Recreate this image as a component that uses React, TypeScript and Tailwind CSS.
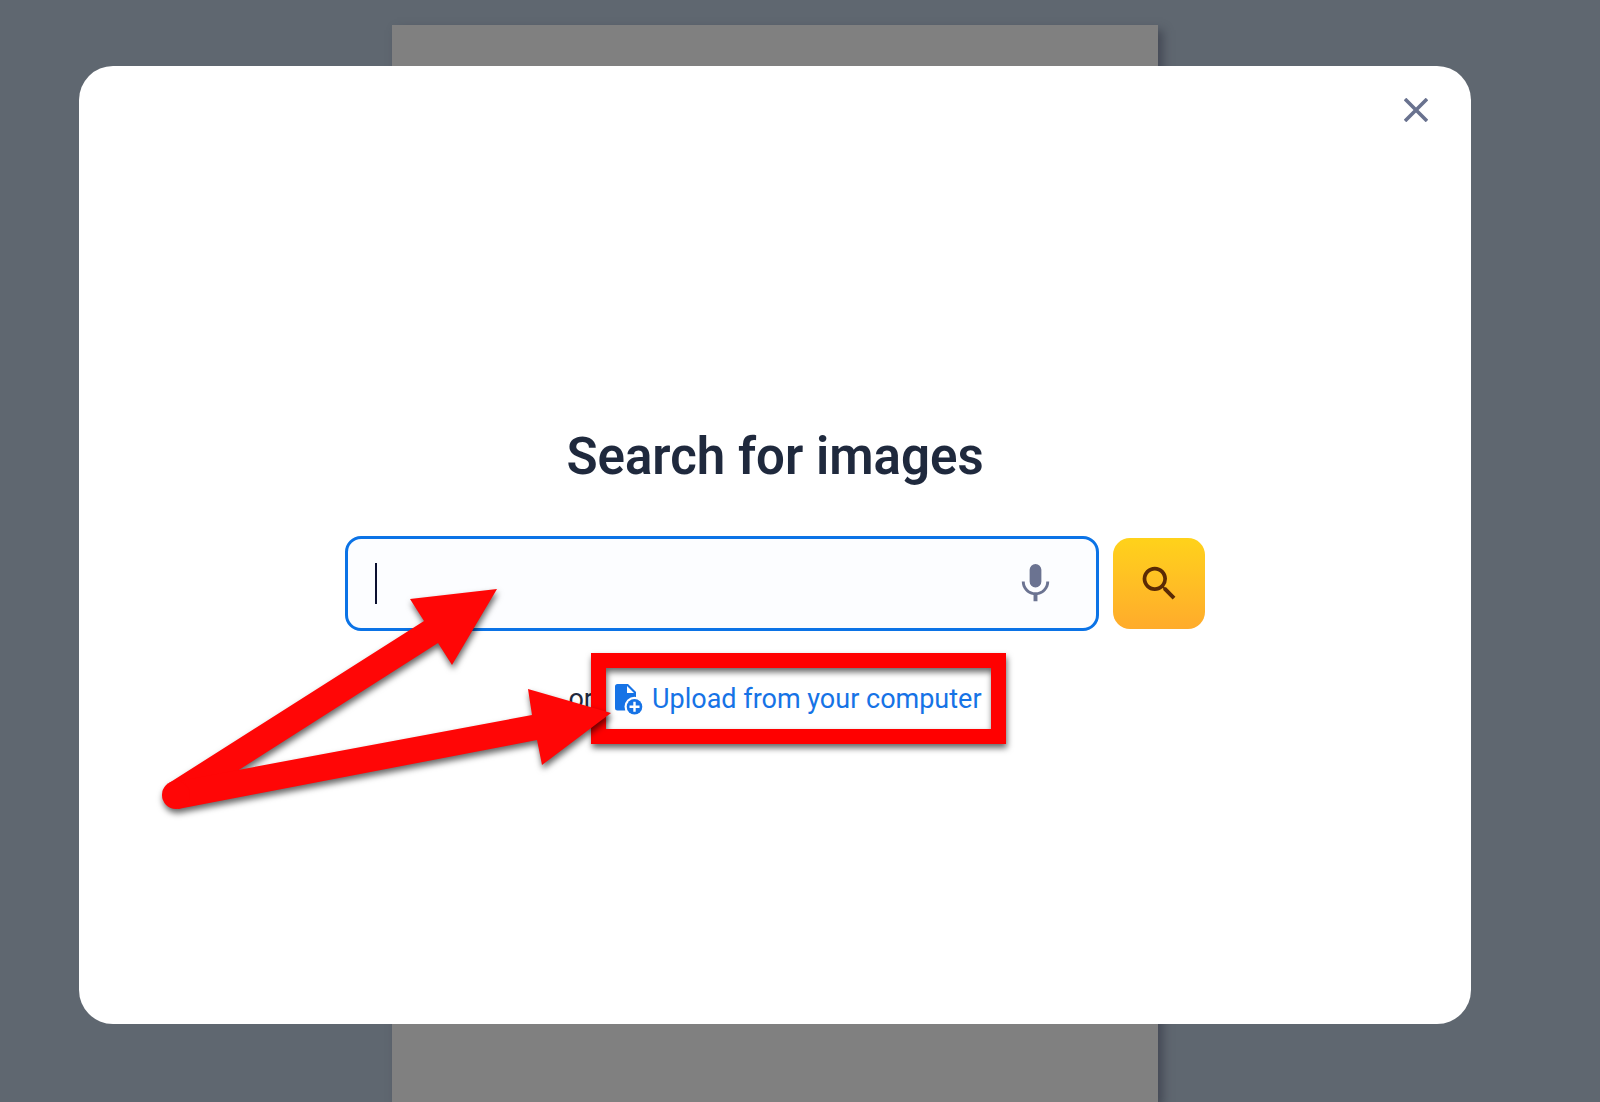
import React from "react";

function ArrowOverlay() {
  return (
    <svg
      aria-hidden="true"
      viewBox="0 0 480 260"
      className="pointer-events-none absolute -left-[194px] top-[39px] z-10 h-[260px] w-[480px] overflow-visible drop-shadow-[1px_4px_3px_rgba(0,0,0,0.6)]"
      fill="#ff0606"
    >
      <path d="M18 208 L273 46 L259 24 L346 14 L301 90 L287 68 L33 230Z" />
      <path d="M23 207 L381 140 L377 114 L460 138 L391 190 L386 165 L27 234Z" />
      <circle cx="25" cy="220" r="14" />
    </svg>
  );
}

function MicIcon() {
  return (
    <svg viewBox="0 0 24 24" className="size-[47px]" fill="currentColor" aria-hidden="true">
      <path d="M12,2A3,3 0 0,1 15,5V11A3,3 0 0,1 12,14A3,3 0 0,1 9,11V5A3,3 0 0,1 12,2M19,11C19,14.53 16.39,17.44 13,17.93V21H11V17.93C7.61,17.44 5,14.53 5,11H6.500A5.500,5.500 0 0,0 12,16.500A5.500,5.500 0 0,0 17.500,11H19Z" />
    </svg>
  );
}

function SearchIcon() {
  return (
    <svg viewBox="0 0 24 24" className="size-[45px]" fill="currentColor" aria-hidden="true">
      <path d="M15.5 14h-.79l-.28-.27A6.471 6.471 0 0 0 16 9.5 6.5 6.5 0 1 0 9.5 16c1.61 0 3.09-.59 4.23-1.57l.27.28v.79l5 4.99L20.49 19l-4.99-5zm-6 0C7.01 14 5 11.99 5 9.5S7.01 5 9.5 5 14 7.01 14 9.5 11.99 14 9.5 14z" />
    </svg>
  );
}

function FileAddIcon() {
  return (
    <svg viewBox="0 0 28 31" className="h-[31px] w-7" aria-hidden="true">
      <path d="M2.5 0H13L21 8V26.5H2.5A2.5 2.5 0 0 1 0 24V2.5A2.5 2.5 0 0 1 2.5 0Z" fill="currentColor" />
      <path d="M12 2V9H19Z" fill="#fff" />
      <circle cx="19.5" cy="22.7" r="10" fill="#fff" />
      <circle cx="19.5" cy="22.7" r="7.8" fill="currentColor" />
      <path d="M19.5 17.7V27.7M14.5 22.7H24.5" stroke="#fff" strokeWidth="2.4" />
    </svg>
  );
}

export default function App() {
  return (
    <div className="relative flex min-h-screen flex-col bg-[#5f6770] font-[Roboto,sans-serif]">
      <div className="absolute inset-x-0 bottom-0 top-[25px] flex justify-center">
        <div className="mr-[50px] w-[766px] bg-[#808080] shadow-[5px_5px_9px_rgba(50,54,66,0.6)]" />
      </div>
      <main
        role="dialog"
        aria-labelledby="title"
        className="relative mb-[78px] ml-[79px] mr-[129px] mt-[66px] flex flex-1 flex-col items-center justify-center rounded-[34px] bg-white pt-[54px]"
      >
        <button type="button" aria-label="Close" className="absolute right-[35px] top-6 flex size-10 items-center justify-center text-[#69728f]">
          <svg viewBox="0 0 24 24" className="size-6" fill="none" stroke="currentColor" strokeWidth="3.6" aria-hidden="true">
            <path d="M1 1L23 23M23 1L1 23" />
          </svg>
        </button>
        <h1 id="title" className="text-[51px] font-semibold leading-[60px] text-[#1f293d]">Search for images</h1>
        <div className="relative mt-[49px] flex w-[860px] max-w-full items-center gap-[14px]">
          <div className="relative flex h-[95px] flex-1 items-center rounded-2xl border-3 border-[#0b73e6] bg-[#fcfdff] pl-[27px] pr-[37px]">
            <span className="h-[41px] w-0.5 bg-[#0b1030]" />
            <input type="text" aria-label="Search for images" className="h-full min-w-0 flex-1 bg-transparent text-3xl outline-none" />
            <button type="button" aria-label="Search by voice" className="text-[#6b7391]">
              <MicIcon />
            </button>
          </div>
          <button type="submit" aria-label="Search" className="flex h-[91px] w-[92px] items-center justify-center rounded-[17px] bg-linear-to-b from-[#ffd21a] to-[#ffab2b] text-[#5a2a05]">
            <SearchIcon />
          </button>
          <ArrowOverlay />
        </div>
        <p className="mt-[50px] flex items-center text-[27px] leading-[36px] text-[#1f293d]">
          <span>or</span>
          <a href="#upload" className="relative ml-[22px] flex items-center gap-[9px] text-[#1673e6]">
            <FileAddIcon />
            <span>Upload from your computer</span>
            <span className="pointer-events-none absolute -bottom-[27px] -left-6 -right-6 -top-[28px] border-[15px] border-[#ff0000] drop-shadow-[1px_4px_3px_rgba(0,0,0,0.6)]" />
          </a>
        </p>
      </main>
    </div>
  );
}
